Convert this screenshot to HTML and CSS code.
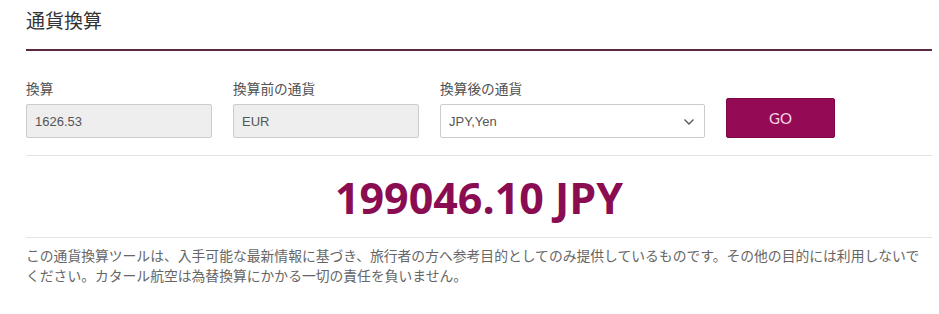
FILE: index.html
```html
<!DOCTYPE html>
<html lang="ja">
<head>
  <meta charset="UTF-8">
  <meta name="viewport" content="width=device-width, initial-scale=1.0">
  <title>通貨換算</title>
  <link rel="stylesheet" href="styles.css">
</head>
<body>
  <div class="converter">
    <h1 class="title">通貨換算</h1>

    <div class="form-row">
      <div class="field field-amount">
        <label for="amount">換算</label>
        <input type="text" id="amount" value="1626.53" readonly>
      </div>
      <div class="field field-from">
        <label for="from">換算前の通貨</label>
        <input type="text" id="from" value="EUR" readonly>
      </div>
      <div class="field field-to">
        <label for="to">換算後の通貨</label>
        <div class="select-box">
          <span id="to">JPY,Yen</span>
          <svg class="chevron" width="12" height="8" viewBox="0 0 12 8">
            <path d="M1.5 1.5 L6 6 L10.5 1.5" fill="none" stroke="#555" stroke-width="1.3"/>
          </svg>
        </div>
      </div>
      <button class="go-button">GO</button>
    </div>

    <div class="result">199046.10 JPY</div>

    <p class="disclaimer">この通貨換算ツールは、入手可能な最新情報に基づき、旅行者の方へ参考目的としてのみ提供しているものです。その他の目的には利用しないでください。カタール航空は為替換算にかかる一切の責任を負いません。</p>
  </div>
</body>
</html>
```

FILE: styles.css
```css
body {
  margin: 0;
  background-color: #ffffff;
  font-family: "Liberation Sans", "Noto Sans CJK JP", sans-serif;
}
.converter {
  padding: 0 7px 0 26px;
}
.title {
  margin: 0;
  padding: 10px 0 15px;
  font-size: 19px;
  line-height: 24px;
  font-weight: normal;
  color: #333333;
  border-bottom: 2px solid #5a2b40;
}
.form-row {
  display: flex;
  align-items: flex-end;
  gap: 21px;
  margin-top: 30px;
  padding-bottom: 17px;
  border-bottom: 1px solid #e4e4e4;
}
.field label {
  display: block;
  font-size: 13.7px;
  line-height: 18px;
  color: #505050;
  margin-bottom: 5px;
}
.field input,
.select-box {
  box-sizing: border-box;
  height: 34px;
  border: 1px solid #cccccc;
  border-radius: 2px;
  padding: 0 8px;
  font-family: "Liberation Sans", sans-serif;
  font-size: 13px;
  color: #555555;
}
.field input {
  background-color: #eeeeee;
  outline: none;
}
.field-amount input,
.field-from input {
  width: 186px;
}
.select-box {
  width: 265px;
  display: flex;
  align-items: center;
  justify-content: space-between;
  padding-right: 9px;
  background-color: #ffffff;
}
.chevron {
  margin-top: 1px;
}
.go-button {
  width: 109px;
  height: 40px;
  background-color: #950a55;
  color: #f6d6e6;
  border: 1px solid #7e0847;
  border-radius: 2px;
  font-family: "Lato", sans-serif;
  font-size: 15px;
  cursor: pointer;
}
.result {
  padding: 12px 0 9px;
  line-height: 60px;
  text-align: center;
  font-family: "Open Sans", sans-serif;
  font-size: 43px;
  font-weight: bold;
  color: #8a0c51;
  border-bottom: 1px solid #e4e4e4;
}
.disclaimer {
  max-width: 900px;
  margin: 0;
  padding-top: 9px;
  font-size: 13.8px;
  line-height: 20px;
  color: #666666;
}
```
